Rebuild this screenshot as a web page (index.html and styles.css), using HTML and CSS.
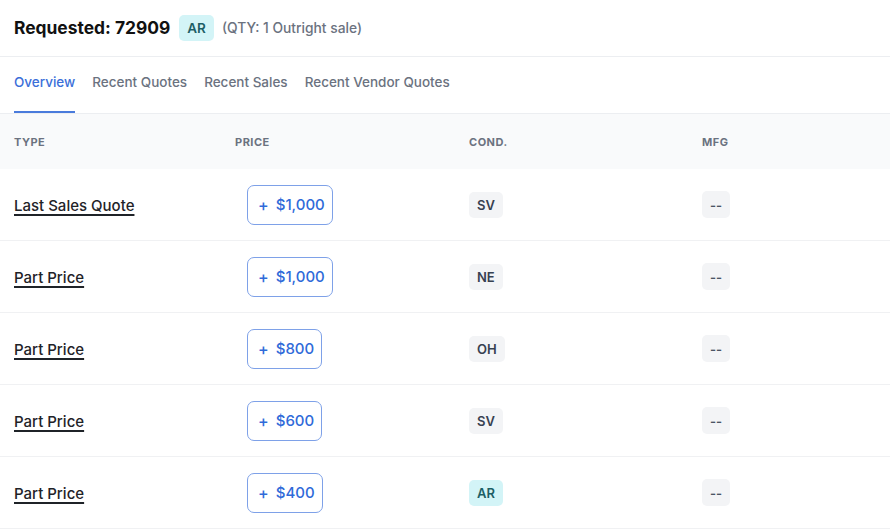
FILE: index.html
```html
<!DOCTYPE html>
<html lang="en">
<head>
<meta charset="utf-8">
<title>Requested: 72909</title>
<link rel="stylesheet" href="styles.css">
</head>
<body>
<div class="page">
  <header class="head">
    <h1 class="title">Requested: 72909</h1>
    <span class="pill pill-cyan pill-head">AR</span>
    <span class="sub">(QTY: 1 Outright sale)</span>
  </header>
  <nav class="tabs">
    <a class="tab active">Overview</a>
    <a class="tab">Recent Quotes</a>
    <a class="tab">Recent Sales</a>
    <a class="tab">Recent Vendor Quotes</a>
  </nav>
  <div class="table">
    <div class="row thead">
      <div class="cell">TYPE</div>
      <div class="cell">PRICE</div>
      <div class="cell">COND.</div>
      <div class="cell">MFG</div>
    </div>
    <div class="row">
      <div class="cell"><a class="link">Last Sales Quote</a></div>
      <div class="cell"><button class="price"><span class="plus">+</span>$1,000</button></div>
      <div class="cell"><span class="pill">SV</span></div>
      <div class="cell"><span class="pill pill-muted">--</span></div>
    </div>
    <div class="row">
      <div class="cell"><a class="link">Part Price</a></div>
      <div class="cell"><button class="price"><span class="plus">+</span>$1,000</button></div>
      <div class="cell"><span class="pill">NE</span></div>
      <div class="cell"><span class="pill pill-muted">--</span></div>
    </div>
    <div class="row">
      <div class="cell"><a class="link">Part Price</a></div>
      <div class="cell"><button class="price"><span class="plus">+</span>$800</button></div>
      <div class="cell"><span class="pill">OH</span></div>
      <div class="cell"><span class="pill pill-muted">--</span></div>
    </div>
    <div class="row">
      <div class="cell"><a class="link">Part Price</a></div>
      <div class="cell"><button class="price"><span class="plus">+</span>$600</button></div>
      <div class="cell"><span class="pill">SV</span></div>
      <div class="cell"><span class="pill pill-muted">--</span></div>
    </div>
    <div class="row">
      <div class="cell"><a class="link">Part Price</a></div>
      <div class="cell"><button class="price"><span class="plus">+</span>$400</button></div>
      <div class="cell"><span class="pill pill-cyan">AR</span></div>
      <div class="cell"><span class="pill pill-muted">--</span></div>
    </div>
  </div>
</div>
</body>
</html>
```
FILE: styles.css
```css
* { box-sizing: border-box; }
html, body { margin: 0; padding: 0; background: #ffffff; }
body {
  font-family: Inter, "Noto Sans", "Liberation Sans", sans-serif;
  color: #111827;
  width: 890px;
  height: 532px;
  overflow: hidden;
}
.head {
  height: 57px;
  display: flex;
  align-items: center;
  padding: 0 14px 1px;
  border-bottom: 1px solid #eceef1;
}
.title {
  margin: 0;
  font-size: 17.4px;
  font-weight: 700;
  color: #111111;
}
.pill {
  display: inline-flex;
  align-items: center;
  justify-content: center;
  height: 26px;
  padding: 0 8px;
  border-radius: 5px;
  background: #f3f4f6;
  color: #374151;
  font-size: 13px;
  font-weight: 600;
}
.pill-cyan { background: #d3f4f7; color: #1d5f66; }
.pill-muted { color: #4b5563; height: 27px; }
.pill-head { margin-left: 9px; padding: 0 8px; height: 26px; font-size: 13.5px; }
.sub {
  margin-left: 8px;
  font-size: 13.8px;
  font-weight: 500;
  color: #6b7280;
}
.tabs {
  height: 57px;
  display: flex;
  gap: 17px;
  padding: 0 14px;
  border-bottom: 1px solid #eceef1;
}
.tab {
  display: block;
  padding-top: 17px;
  height: 56px;
  font-size: 13.5px;
  font-weight: 500;
  line-height: 17px;
  color: #6b7280;
  border-bottom: 2px solid transparent;
}
.tab.active { color: #3b6fd9; border-bottom-color: #4a7bdc; }
.row {
  display: grid;
  grid-template-columns: 221px 234px 233px 1fr;
  align-items: center;
  height: 72px;
  border-bottom: 1px solid #f0f1f3;
}
.cell { padding-left: 14px; }
.thead {
  height: 55px;
  background: #f9fafb;
  border-bottom: none;
  font-size: 11px;
  font-weight: 700;
  letter-spacing: 0.5px;
  color: #6b7280;
}
.link {
  font-size: 15px;
  font-weight: 500;
  color: #1f2328;
  text-decoration: underline;
  text-underline-offset: 3px;
  text-decoration-thickness: 1.5px;
}
.price {
  margin-left: 12px;
  height: 40px;
  padding: 0 7px 0 10px;
  border: 1px solid #7ea1e8;
  border-radius: 7px;
  background: #ffffff;
  font-family: inherit;
  font-size: 15px;
  font-weight: 500;
  color: #2f6ad9;
  display: inline-flex;
  align-items: center;
}
.plus { margin-right: 7px; font-size: 16px; }
```
